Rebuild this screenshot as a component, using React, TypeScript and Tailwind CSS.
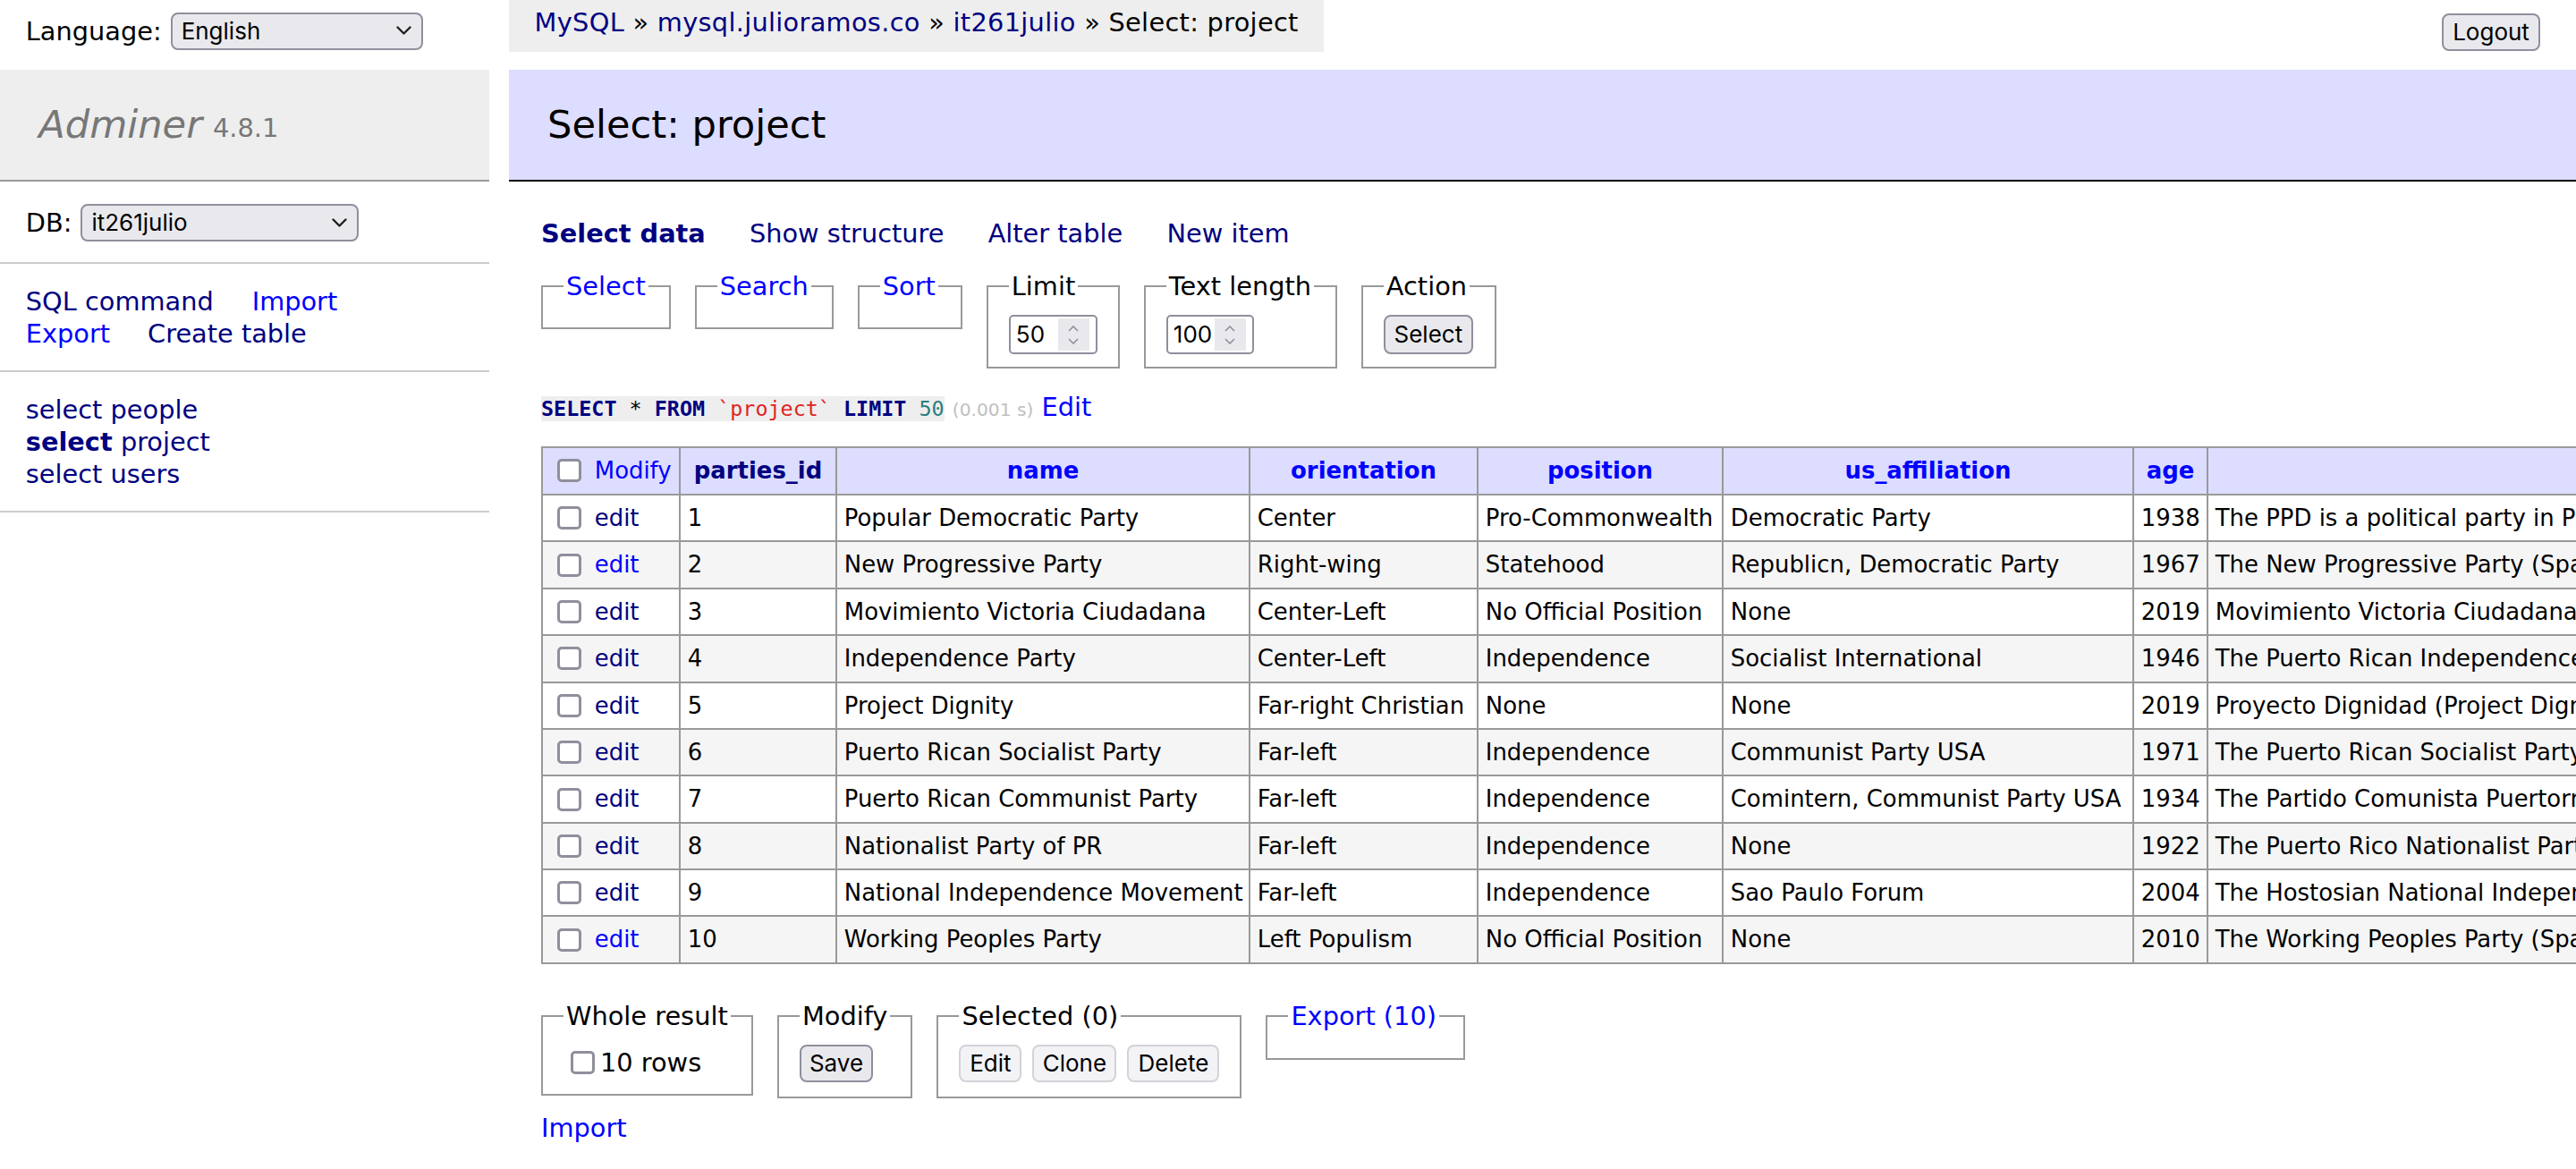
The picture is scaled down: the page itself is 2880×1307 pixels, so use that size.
import React from "react";

type Row = {
  id: number;
  name: string;
  orientation: string;
  position: string;
  us: string;
  age: number;
  desc: string;
  visited: boolean;
};

const rows: Row[] = [
  { id: 1, name: "Popular Democratic Party", orientation: "Center", position: "Pro-Commonwealth", us: "Democratic Party", age: 1938, desc: "The PPD is a political party in Puerto Rico that advocates for the current political status of the island…", visited: true },
  { id: 2, name: "New Progressive Party", orientation: "Right-wing", position: "Statehood", us: "Republicn, Democratic Party", age: 1967, desc: "The New Progressive Party (Spanish: Partido Nuevo Progresista, PNP) is a political party in Puerto Rico…", visited: false },
  { id: 3, name: "Movimiento Victoria Ciudadana", orientation: "Center-Left", position: "No Official Position", us: "None", age: 2019, desc: "Movimiento Victoria Ciudadana (Citizens' Victory Movement) is a political party in Puerto Rico…", visited: true },
  { id: 4, name: "Independence Party", orientation: "Center-Left", position: "Independence", us: "Socialist International", age: 1946, desc: "The Puerto Rican Independence Party (Spanish: Partido Independentista Puertorriqueño, PIP)…", visited: true },
  { id: 5, name: "Project Dignity", orientation: "Far-right Christian", position: "None", us: "None", age: 2019, desc: "Proyecto Dignidad (Project Dignity) is a conservative political party in Puerto Rico…", visited: true },
  { id: 6, name: "Puerto Rican Socialist Party", orientation: "Far-left", position: "Independence", us: "Communist Party USA", age: 1971, desc: "The Puerto Rican Socialist Party (Spanish: Partido Socialista Puertorriqueño, PSP)…", visited: true },
  { id: 7, name: "Puerto Rican Communist Party", orientation: "Far-left", position: "Independence", us: "Comintern, Communist Party USA", age: 1934, desc: "The Partido Comunista Puertorriqueño was a communist party in Puerto Rico…", visited: true },
  { id: 8, name: "Nationalist Party of PR", orientation: "Far-left", position: "Independence", us: "None", age: 1922, desc: "The Puerto Rico Nationalist Party (Spanish: Partido Nacionalista de Puerto Rico, PNPR)…", visited: true },
  { id: 9, name: "National Independence Movement", orientation: "Far-left", position: "Independence", us: "Sao Paulo Forum", age: 2004, desc: "The Hostosian National Independence Movement (Spanish: Movimiento Independentista Nacional Hostosiano)…", visited: true },
  { id: 10, name: "Working Peoples Party", orientation: "Left Populism", position: "No Official Position", us: "None", age: 2010, desc: "The Working Peoples Party (Spanish: Partido del Pueblo Trabajador, PPT) was a political party…", visited: false },
];

const ctrl = "font-['Inter','Liberation_Sans',sans-serif] text-[26px] leading-none text-black";

function Chevron() {
  return (
    <svg width="17" height="11" viewBox="0 0 17 11" fill="none">
      <path d="M1.5 1.5 L8.5 8.5 L15.5 1.5" stroke="#1f1f1f" strokeWidth="2.4" strokeLinecap="round" strokeLinejoin="round" />
    </svg>
  );
}

function FakeSelect({ value, width }: { value: string; width: string }) {
  return (
    <div className={`flex h-[42px] items-center justify-between rounded-[8px] border-2 border-[#8f8f9d] bg-[#e9e9ed] pl-[10px] pr-[11px] ${width} ${ctrl}`}>
      <span>{value}</span>
      <Chevron />
    </div>
  );
}

function Checkbox() {
  return <span className="inline-block h-[26px] w-[27px] shrink-0 rounded-[5px] border-[3px] border-[#8f8f9d] bg-white" />;
}

function NumberInput({ value, width }: { value: string; width: string }) {
  return (
    <div className={`flex h-[44px] items-center justify-between rounded-[5px] border-2 border-[#8f8f9d] bg-white pl-[6px] pr-[7px] ${width} ${ctrl}`}>
      <span>{value}</span>
      <div className="flex h-[36px] w-[35px] flex-col items-center justify-center gap-[7px] bg-[#e9e9ed]">
        <svg width="12" height="7" viewBox="0 0 12 7" fill="none">
          <path d="M1 6 L6 1 L11 6" stroke="#8f8f9d" strokeWidth="1.6" />
        </svg>
        <svg width="12" height="7" viewBox="0 0 12 7" fill="none">
          <path d="M1 1 L6 6 L11 1" stroke="#8f8f9d" strokeWidth="1.6" />
        </svg>
      </div>
    </div>
  );
}

function Button({ label, width, disabled }: { label: string; width: string; disabled?: boolean }) {
  return (
    <div
      className={`flex h-[42px] items-center justify-center rounded-[8px] border-2 ${width} ${ctrl} ${
        disabled ? "border-[#d2d2d8] bg-[#f3f3f6] text-[#707070]" : "border-[#8f8f9d] bg-[#e9e9ed]"
      }`}
    >
      {label}
    </div>
  );
}

function Fieldset({ legend, width, children }: { legend: React.ReactNode; width: string; children?: React.ReactNode }) {
  return (
    <fieldset className={`shrink-0 border-2 border-[#999] px-[23px] pt-[14.4px] pb-[14.4px] ${width}`}>
      <legend className="whitespace-nowrap px-[3px] leading-[36px]">{legend}</legend>
      {children}
    </fieldset>
  );
}

const cell = "border-2 border-[#999] px-[7.8px] overflow-hidden";
const head = "border-2 border-[#999] px-[13px] text-center font-bold overflow-hidden";

export default function App() {
  return (
    <div className="h-[1307px] w-[2880px] overflow-hidden bg-white font-['DejaVu_Sans','Verdana',sans-serif] text-[28.8px] leading-[36px] text-black">
      {/* top bar: language, breadcrumb, logout */}
      <div className="flex h-[57.6px] items-start">
        <div className="flex h-[60.5px] w-[568.8px] shrink-0 items-center pl-[28.8px] pt-[8.64px]">
          <span>Language:</span>
          <div className="ml-[10px]">
            <FakeSelect value="English" width="w-[282px]" />
          </div>
        </div>
        <div className="h-[57.6px] whitespace-nowrap bg-[#eee] px-[28.8px] leading-[51.84px] tracking-[0.3px]">
          <a className="text-[#000080]">MySQL</a> » <a className="text-[#000080]">mysql.julioramos.co</a> »{" "}
          <a className="text-[#000080]">it261julio</a> » Select: project
        </div>
        <div className="flex-1" />
        <div className="mr-[40px] mt-[15px]">
          <Button label="Logout" width="w-[110px]" />
        </div>
      </div>

      <div className="flex pt-[20px]">
        {/* sidebar */}
        <div className="w-[547px] shrink-0">
          <h1 className="flex h-[125px] items-center border-b-2 border-[#999] bg-[#eee] px-[43.2px] text-[43.2px] leading-[54px] text-[#777]">
            <span className="italic">Adminer</span>
            <span className="ml-[12px] mt-[8px] text-[28.9px] leading-none">4.8.1</span>
          </h1>
          <div className="flex h-[92px] items-center border-b-2 border-[#ccc] px-[28.8px] pt-[3px]">
            <span>DB:</span>
            <div className="ml-[10px]">
              <FakeSelect value="it261julio" width="w-[311px]" />
            </div>
          </div>
          <div className="border-b-2 border-[#ccc] px-[28.8px] pb-[23px] pt-[24px]">
            <div className="whitespace-nowrap">
              <a className="mr-[43px] text-[#000080]">SQL command</a>
              <a className="text-[#00f]">Import</a>
            </div>
            <div className="whitespace-nowrap">
              <a className="mr-[42px] text-[#00f]">Export</a>
              <a className="text-[#000080]">Create table</a>
            </div>
          </div>
          <ul className="border-b-2 border-[#ccc] px-[28.8px] pb-[23px] pt-[24px] text-[#000080]">
            <li>
              <a>select</a> <a>people</a>
            </li>
            <li>
              <a className="font-bold">select</a> <a>project</a>
            </li>
            <li>
              <a>select</a> <a>users</a>
            </li>
          </ul>
        </div>

        {/* content */}
        <div className="ml-[21.8px] min-w-0 flex-1 overflow-hidden">
          <h2 className="border-b-2 border-black bg-[#ddf] px-[43.2px] py-[34.56px] text-[43.2px] leading-[54px]">Select: project</h2>

          <div className="pl-[36.2px]">
            <p className="mt-[40px] whitespace-nowrap text-[#000080]">
              <a className="mr-[40px] font-bold">Select data</a> <a className="mr-[40px]">Show structure</a>{" "}
              <a className="mr-[40px]">Alter table</a> <a>New item</a>
            </p>

            <div className="mt-[23px] flex items-start gap-[27px]">
              <Fieldset legend={<a className="text-[#00f]">Select</a>} width="w-[144px]" />
              <Fieldset legend={<a className="text-[#00f]">Search</a>} width="w-[155px]" />
              <Fieldset legend={<a className="text-[#00f]">Sort</a>} width="w-[117px]" />
              <Fieldset legend="Limit" width="w-[149px]">
                <NumberInput value="50" width="w-[99px]" />
              </Fieldset>
              <Fieldset legend="Text length" width="w-[216px]">
                <NumberInput value="100" width="w-[98px]" />
              </Fieldset>
              <Fieldset legend="Action" width="w-[151px]">
                <div className="flex h-[44px] items-center">
                  <Button label="Select" width="w-[100px] h-[44px]" />
                </div>
              </Fieldset>
            </div>

            <p className="mt-[25px] whitespace-nowrap">
              <code className="bg-[#eee] font-['DejaVu_Sans_Mono','Liberation_Mono',monospace] text-[23.4px]">
                <b className="text-[#000080]">SELECT</b> * <b className="text-[#000080]">FROM</b>{" "}
                <span className="text-[#e02424]">`project`</span> <b className="text-[#000080]">LIMIT</b>{" "}
                <span className="text-[#2a7f7f]">50</span>
              </code>{" "}
              <span className="text-[20.2px] text-[#c0c0c0]">(0.001 s)</span> <a className="text-[#00f]">Edit</a>
            </p>

            <table className="mt-[22.5px] w-[3300px] table-fixed border-collapse whitespace-nowrap text-[25.92px] leading-[32.4px]">
              <thead>
                <tr className="h-[53px] bg-[#ddf]">
                  <td className={`w-[154px] ${cell}`}>
                    <div className="flex items-center">
                      <span className="ml-[8px] mr-[15px] flex">
                        <Checkbox />
                      </span>
                      <a className="text-[#00f]">Modify</a>
                    </div>
                  </td>
                  <th className={`w-[175px] text-[#000080] ${head}`}>parties_id</th>
                  <th className={`w-[462px] text-[#00f] ${head}`}>name</th>
                  <th className={`w-[255px] text-[#00f] ${head}`}>orientation</th>
                  <th className={`w-[274px] text-[#00f] ${head}`}>position</th>
                  <th className={`w-[459px] text-[#00f] ${head}`}>us_affiliation</th>
                  <th className={`w-[83px] text-[#00f] ${head}`}>age</th>
                  <th className={`text-[#00f] ${head}`}>description</th>
                </tr>
              </thead>
              <tbody>
                {rows.map((r, i) => (
                  <tr key={r.id} className={`h-[52.4px] ${i % 2 === 1 ? "bg-[#f5f5f5]" : "bg-white"}`}>
                    <td className={cell}>
                      <div className="flex items-center">
                        <span className="ml-[8px] mr-[15px] flex">
                          <Checkbox />
                        </span>
                        <a className={r.visited ? "text-[#000080]" : "text-[#00f]"}>edit</a>
                      </div>
                    </td>
                    <td className={cell}>{r.id}</td>
                    <td className={cell}>{r.name}</td>
                    <td className={cell}>{r.orientation}</td>
                    <td className={cell}>{r.position}</td>
                    <td className={cell}>{r.us}</td>
                    <td className={cell}>{r.age}</td>
                    <td className={cell}>{r.desc}</td>
                  </tr>
                ))}
              </tbody>
            </table>

            {/* footer actions */}
            <div className="mt-[40px] flex items-start gap-[27px]">
              <Fieldset legend="Whole result" width="w-[237px]">
                <div className="flex h-[40px] items-center">
                  <span className="ml-[8px] mr-[6px] flex">
                    <Checkbox />
                  </span>
                  <span>10 rows</span>
                </div>
              </Fieldset>
              <Fieldset legend="Modify" width="w-[150px]">
                <div className="flex h-[43px] items-start">
                  <Button label="Save" width="w-[82px]" />
                </div>
              </Fieldset>
              <Fieldset legend="Selected (0)" width="w-[340px]">
                <div className="flex h-[43px] items-start gap-[12px]">
                  <Button label="Edit" width="w-[70px]" disabled />
                  <Button label="Clone" width="w-[94px]" disabled />
                  <Button label="Delete" width="w-[103px]" disabled />
                </div>
              </Fieldset>
              <Fieldset legend={<a className="text-[#00f]">Export (10)</a>} width="w-[223px]" />
            </div>

            <div className="mt-[15px]">
              <a className="text-[#00f]">Import</a>
            </div>
          </div>
        </div>
      </div>
    </div>
  );
}
